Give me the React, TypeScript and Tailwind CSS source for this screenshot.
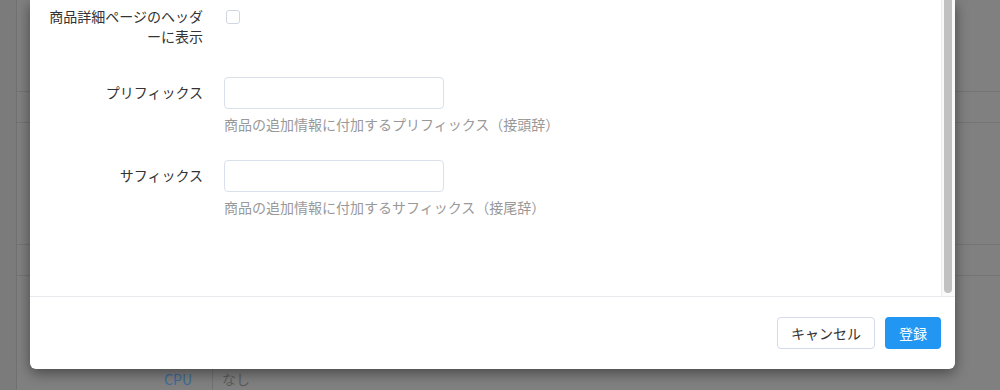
const jp = "font-['Noto_Sans_CJK_JP','Noto_Sans',sans-serif]";

function Backdrop() {
  return (
    <div className="flex h-[390px] w-[1000px] bg-[#808080]">
      <div className="w-[17px] shrink-0 border-r border-[#717171] bg-[#7b7b7b]" />
      <div className="flex flex-1 flex-col">
        <div className="h-[92px] border-b border-[#747474]" />
        <div className="h-[31px] border-b border-[#747474]" />
        <div className="h-[122px] border-b border-[#747474]" />
        <div className="h-[31px] border-b border-[#747474]" />
        <div className="h-[92px]" />
        <div className="flex h-[22px] items-center text-[14px]">
          <div className="w-[195px] pr-[20px] text-right text-[#3b6c9c]">CPU</div>
          <div className="h-full border-l border-[#727272]" />
          <div className="pl-[9px] text-[#5c5c5c]">なし</div>
        </div>
      </div>
    </div>
  );
}

function FieldRow({ label, help }: { label: string; help: string }) {
  return (
    <div className="flex">
      <div className="w-[158px] shrink-0 pt-[5px] text-right leading-5 text-[#333]">{label}</div>
      <div className="ml-[21px]">
        <input
          type="text"
          className="block h-[32px] w-[220px] rounded-[4px] border border-[#d9e0ea] bg-white px-2 outline-none"
        />
        <p className="mt-[5px] leading-5 text-[#999]">{help}</p>
      </div>
    </div>
  );
}

export default function App() {
  return (
    <div className={`relative h-[390px] w-[1000px] overflow-hidden text-[14px] ${jp}`}>
      <Backdrop />
      <div className="absolute left-[30px] top-0 flex h-[369px] w-[925px] flex-col overflow-hidden rounded-b-[6px] bg-white shadow-[0_4px_14px_rgba(0,0,0,0.45)]">
        <div className="flex h-[296px] shrink-0">
          <div className="flex-1 pl-[15px] pt-[6px]">
            <div className="flex">
              <div className="w-[158px] shrink-0 text-right leading-5 text-[#333]">
                商品詳細ページのヘッダーに表示
              </div>
              <div className="ml-[23px] pt-[4px]">
                <div className="h-[14px] w-[14px] rounded-[3px] border border-[#cfd6e2] bg-white" />
              </div>
            </div>
            <div className="mt-[31px]">
              <FieldRow label="プリフィックス" help="商品の追加情報に付加するプリフィックス（接頭辞）" />
            </div>
            <div className="mt-[26px]">
              <FieldRow label="サフィックス" help="商品の追加情報に付加するサフィックス（接尾辞）" />
            </div>
          </div>
          <div className="flex w-[14px] shrink-0 border-l border-[#ececec] bg-[#fafafa] pl-[2px]">
            <div className="mb-[3px] w-[8px] rounded-b-full bg-[#c1c1c1]" />
          </div>
        </div>
        <div className="flex flex-1 items-start justify-end gap-[10px] border-t border-[#e7e9ec] pr-[14px] pt-[20px]">
          <button className="h-[32px] w-[98px] rounded-[4px] border border-[#d3dbe8] bg-white text-[14px] text-[#333]">
            キャンセル
          </button>
          <button className="h-[32px] w-[56px] rounded-[4px] bg-[#2196f3] text-[14px] text-white">
            登録
          </button>
        </div>
      </div>
    </div>
  );
}
